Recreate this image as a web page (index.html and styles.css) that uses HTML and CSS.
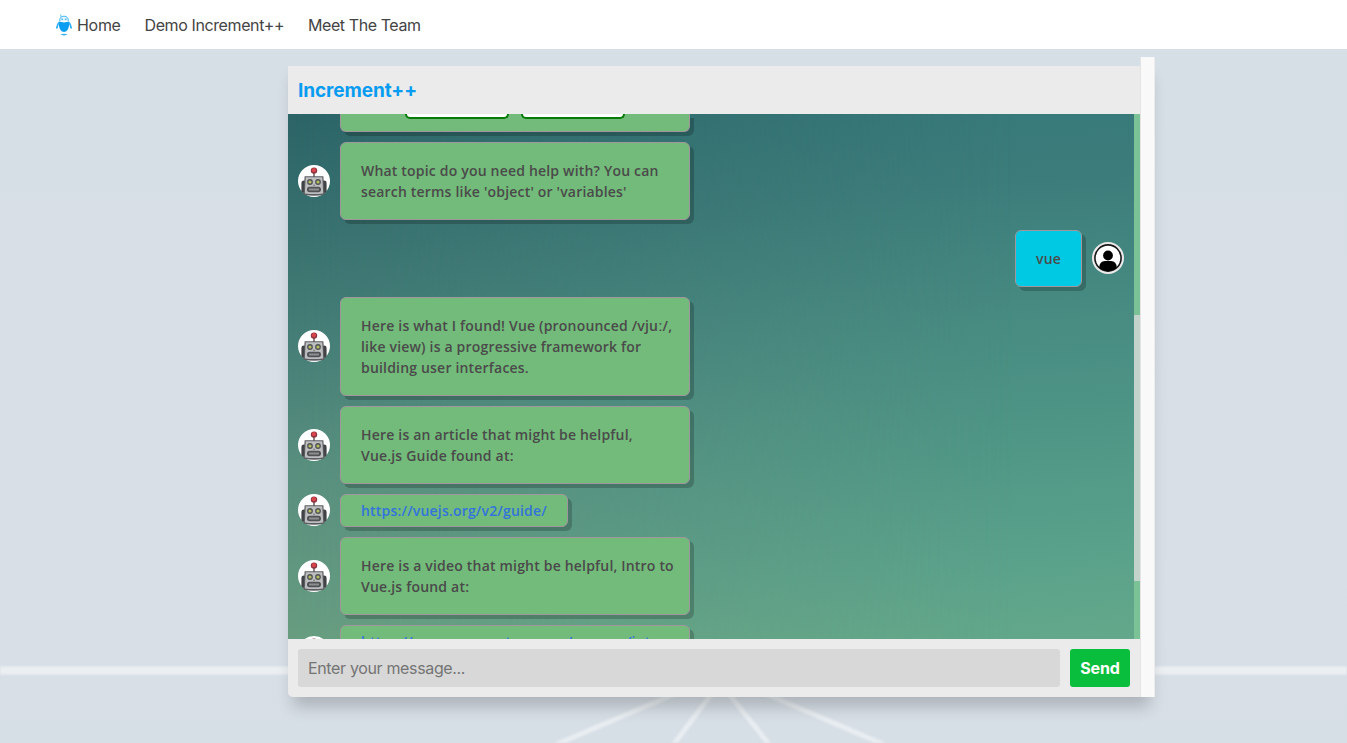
FILE: index.html
```
<!DOCTYPE html>
<html lang="en">
<head>
<meta charset="utf-8">
<title>Increment++</title>
<link rel="stylesheet" href="styles.css">
</head>
<body>
<svg class="defs" width="0" height="0" aria-hidden="true">
  <symbol id="robot" viewBox="0 0 32 32">
    <circle cx="16" cy="16" r="16" fill="#fff"/>
    <rect x="3.4" y="15.5" width="5" height="12.5" rx="2.4" fill="#424346"/>
    <rect x="23.6" y="15.5" width="5" height="12.5" rx="2.4" fill="#424346"/>
    <path d="M15.3 7h1.4v5h-1.4z" fill="#60494c"/>
    <path d="M6.6 11.2h18.8l1 18.2q-10.4 2.8-20.8 0z" fill="#5b5c5f"/>
    <path d="M7.7 12.2h16.6l.9 16.2q-9.2 1.4-18.4 0z" fill="#bdbec0"/>
    <circle cx="16" cy="5.6" r="3.2" fill="#8c3440"/>
    <circle cx="15.9" cy="5.2" r="2.1" fill="#d9454b"/>
    <circle cx="12" cy="17" r="2.9" fill="#505352"/>
    <circle cx="20" cy="17" r="2.9" fill="#505352"/>
    <circle cx="12" cy="17" r="1.6" fill="#b5bd62"/>
    <circle cx="20" cy="17" r="1.6" fill="#b5bd62"/>
    <path d="M16 19l1 2h-2z" fill="#777"/>
    <rect x="9" y="21.8" width="14" height="5.4" rx="2.6" fill="#515254"/>
    <path d="M11.3 24.5h9.4" stroke="#a3a4a6" stroke-width="2" stroke-dasharray="1.5 .5"/>
  </symbol>
</svg>

<nav class="navbar">
  <a class="nav-item nav-home">
    <svg class="logo" viewBox="0 0 16 22">
      <path d="M5 3.2L4.7.4" stroke="#6cc7f5" stroke-width="1"/>
      <path d="M3.7 7Q3.5 2.2 8 2.2T12.3 7" fill="#e3f5fe" stroke="#47b8f2" stroke-width="1"/>
      <path d="M5.3 5.2h1.8M8.9 5.2h1.8" stroke="#1ba6f1" stroke-width="1"/>
      <path d="M2.8 7.6Q8 9.2 13.2 7.6Q13.5 18 8 18T2.8 7.6" fill="#079df0"/>
      <path d="M3 8.5Q1.2 10.5.8 14.5M13 8.5q1.8 2 2.2 6" stroke="#35b1f3" stroke-width="1.8" fill="none"/>
      <ellipse cx="8" cy="20.6" rx="3.2" ry=".8" fill="#36b4f3"/>
    </svg>
    <span>Home</span>
  </a>
  <a class="nav-item nav-demo">Demo Increment++</a>
  <a class="nav-item nav-team">Meet The Team</a>
</nav>

<main class="stage">
  <svg class="backdrop" viewBox="0 0 1347 694">
    <path d="M-10 621.5h1367" stroke="#ebeff2" stroke-width="8"/>
    <path d="M698 635L548 699M719 635L671 699M721 635l51 64M743 635l149 64" stroke="#e8edf1" stroke-width="5" fill="none"/>
  </svg>

  <section class="frame">
    <div class="widget">
      <header class="chat-head">Increment++</header>
      <div class="chat">
        <div class="messages">
          <div class="row row-first">
            <div class="bubble options"><span class="option"></span><span class="option"></span></div>
          </div>
          <div class="row">
            <svg class="avatar"><use href="#robot"/></svg>
            <div class="bubble">What topic do you need help with? You can<br>search terms like 'object' or 'variables'</div>
          </div>
          <div class="row row-user">
            <div class="bubble bubble-user">vue</div>
            <svg class="avatar" viewBox="0 0 32 32">
              <circle cx="16" cy="16" r="16" fill="#ebe9e9"/>
              <circle cx="16" cy="16" r="13.1" fill="#fff" stroke="#171717" stroke-width="1.6"/>
              <circle cx="16" cy="13.5" r="4.9"/>
              <path d="M7.2 25.5Q7.5 19.4 13 19h6Q24.5 19.4 24.8 25.5Q16 33 7.2 25.5z"/>
            </svg>
          </div>
          <div class="row">
            <svg class="avatar"><use href="#robot"/></svg>
            <div class="bubble">Here is what I found! Vue (pronounced /vjuː/,<br>like view) is a progressive framework for<br>building user interfaces.</div>
          </div>
          <div class="row">
            <svg class="avatar"><use href="#robot"/></svg>
            <div class="bubble">Here is an article that might be helpful,<br>Vue.js Guide found at:</div>
          </div>
          <div class="row">
            <svg class="avatar"><use href="#robot"/></svg>
            <div class="bubble bubble-link short"><a>https://vuejs.org/v2/guide/</a></div>
          </div>
          <div class="row">
            <svg class="avatar"><use href="#robot"/></svg>
            <div class="bubble">Here is a video that might be helpful, Intro to<br>Vue.js found at:</div>
          </div>
          <div class="row">
            <svg class="avatar"><use href="#robot"/></svg>
            <div class="bubble bubble-link tall"><a>https://www.vuemastery.com/courses/intro-</a></div>
          </div>
        </div>
        <div class="chat-track"><div class="chat-thumb"></div></div>
      </div>
      <form class="composer">
        <div class="field">Enter your message...</div>
        <div class="send">Send</div>
      </form>
    </div>
    <div class="frame-track"></div>
  </section>
</main>
</body>
</html>
```
FILE: styles.css
```
* { box-sizing: border-box; }
body {
  margin: 0;
  height: 743px;
  overflow: hidden;
  font-family: Inter, "Liberation Sans", sans-serif;
  font-size: 16px;
  color: #4a4a4a;
}
.defs { position: absolute; }

.navbar {
  height: 49px;
  padding: 1px 0 0 56px;
  display: flex;
  align-items: center;
  gap: 24px;
  background: #fff;
}
.nav-item { white-space: nowrap; color: #444; letter-spacing: -.39px; }
.nav-home { display: flex; align-items: center; gap: 5px; width: 64.5px; letter-spacing: -.3px; }
.nav-demo { width: 139.5px; }
.nav-team { letter-spacing: -.42px; }
.logo { width: 16px; height: 22px; flex: none; }

.stage {
  position: relative;
  height: 694px;
  padding: 8px 0 0 288px;
  background: linear-gradient(#d7dfe6, #d8dfe7 85%, #d7dfe6);
}
.backdrop {
  position: absolute;
  inset: 0;
  width: 1347px;
  height: 694px;
  filter: blur(1.2px);
}

.frame {
  position: relative;
  display: flex;
  width: 867px;
  height: 640px;
  border-radius: 5px;
  box-shadow: 0 15px 15px -5px rgba(0, 0, 0, .2);
}
.widget {
  width: 852px;
  margin-top: 9px;
  display: flex;
  flex-direction: column;
}
.frame-track {
  width: 15px;
  background: #f9f9f9;
  border-left: 1px solid #e4e4e4;
  border-right: 1px solid #ececec;
}

.chat-head {
  height: 48px;
  padding: 1px 0 0 10px;
  line-height: 48px;
  background: #ebebeb;
  color: #079cf0;
  font-size: 19px;
  font-weight: 700;
  letter-spacing: -.08px;
}

.chat {
  position: relative;
  display: flex;
  height: 525px;
  overflow: hidden;
  background: linear-gradient(176deg, #357779, #3c7d7b 20%, #458880 38%, #4f9686 64%, #5ba28b 86%, #63a88a);
}
.chat::before {
  content: "";
  position: absolute;
  inset: 0;
  background: linear-gradient(176deg, #2c6467, #3b7370 24%, #457d76 38%, #588e7d 60%, #659a80 86%, #6fa480);
  mask-image: linear-gradient(90deg, #000, transparent 85%);
}
.messages {
  position: relative;
  flex: 1;
  padding: 0 10px;
  display: flex;
  flex-direction: column;
  gap: 10px;
}
.row { display: flex; flex: none; align-items: center; gap: 10px; }
.row-first { padding-left: 42px; }
.row-user { justify-content: flex-end; }
.avatar { width: 32px; height: 32px; flex: none; margin-bottom: .4px; }

.bubble {
  width: 350px;
  padding: 17px 0 17px 20px;
  border: 1px solid #a0969b;
  border-radius: 6px;
  background: #73bb7a;
  box-shadow: 4px 4px 0 rgba(0, 0, 0, .2);
  font-family: "Open Sans", "Noto Sans", sans-serif;
  font-size: 14px;
  font-weight: 600;
  line-height: 21px;
  letter-spacing: .19px;
  white-space: nowrap;
}
.bubble-user { width: 67px; background: #00cae3; }
.bubble-link { padding-top: 5px; padding-bottom: 5px; color: #3273dc; }
.short { width: 228px; }
.tall { height: 54px; }
.options {
  display: flex;
  gap: 12px;
  height: 18px;
  padding: 0 0 0 64px;
  border-top: 0;
  border-radius: 0 0 6px 6px;
}
.option {
  width: 104px;
  height: 5px;
  border: 2px solid #087a08;
  border-top: 0;
  border-radius: 0 0 5px 5px;
  background: #fff;
}

.chat-track { position: relative; width: 6px; padding-top: 201px; background: #7bc396; }
.chat-thumb { height: 266px; background: #c1d3cb; }

.composer {
  display: flex;
  gap: 10px;
  height: 58px;
  padding: 10px;
  background: #ebebeb;
  border-radius: 0 0 0 5px;
}
.field {
  flex: 1;
  padding-left: 10px;
  line-height: 38px;
  border-radius: 3px;
  background: #d8d8d8;
  color: #747474;
  letter-spacing: -.35px;
}
.send {
  width: 60px;
  line-height: 38px;
  text-align: center;
  border-radius: 3px;
  background: #09be3c;
  color: #fff;
  font-weight: 700;
  letter-spacing: -.1px;
}
```
